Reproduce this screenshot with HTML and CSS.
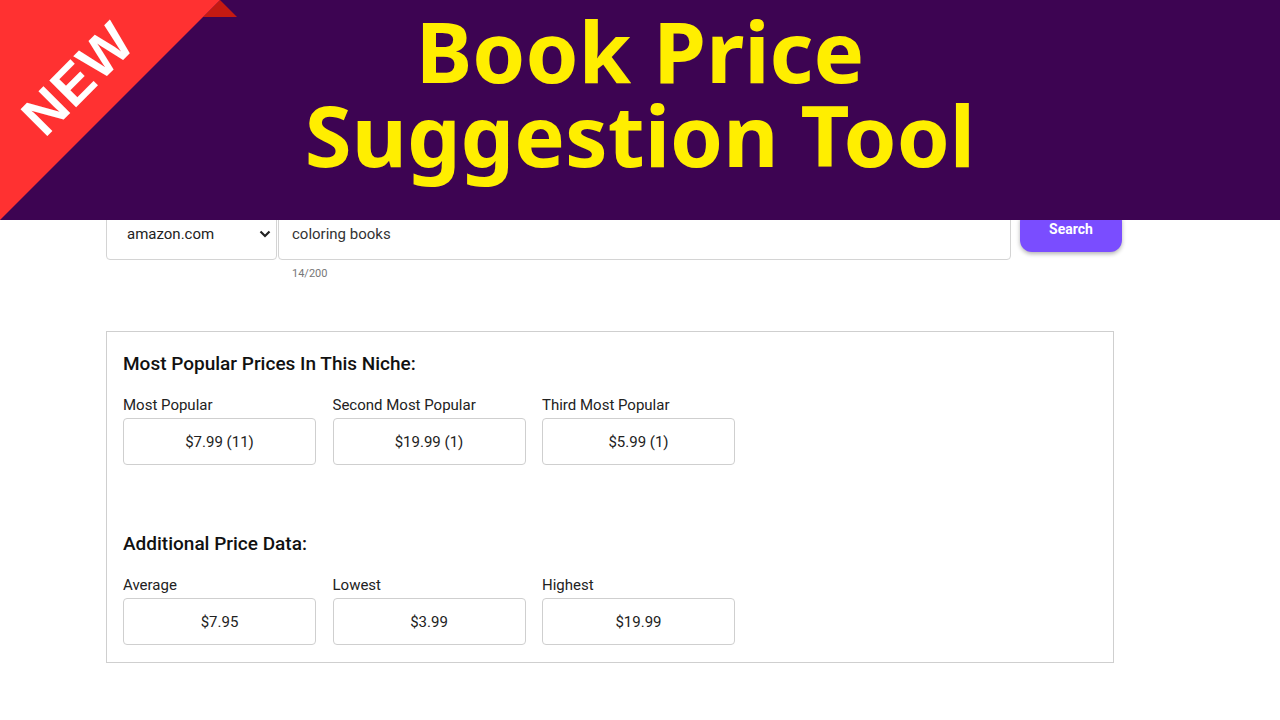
FILE: index.html
```html
<!DOCTYPE html>
<html>
<head>
<meta charset="utf-8">
<link rel="stylesheet" href="styles.css">
</head>
<body>
<header class="banner">
  <svg class="ribbon" width="240" height="220" viewBox="0 0 240 220">
    <polygon points="203,17 220,0 237,17" fill="#c41a12"/>
    <polygon points="0,0 220,0 0,220" fill="#ff3131"/>
  </svg>
  <span class="new-tag">NEW</span>
  <h1 class="title"><span class="line">Book Price</span><span class="line">Suggestion Tool</span></h1>
</header>
<main class="page">
  <div class="search-row">
    <div class="select">
      <span>amazon.com</span>
      <svg class="chev" width="12" height="8" viewBox="0 0 12 8"><path d="M1.5 1.5l4.5 4.5 4.5-4.5" fill="none" stroke="#222" stroke-width="2.2"/></svg>
    </div>
    <div class="query">
      <div class="input">coloring books</div>
      <div class="counter">14/200</div>
    </div>
    <button class="search-btn">Search</button>
  </div>

  <section class="card">
    <h2 class="card-title">Most Popular Prices In This Niche:</h2>
    <div class="stats">
      <div class="stat"><div class="stat-label">Most Popular</div><div class="stat-box">$7.99 (11)</div></div>
      <div class="stat"><div class="stat-label">Second Most Popular</div><div class="stat-box">$19.99 (1)</div></div>
      <div class="stat"><div class="stat-label">Third Most Popular</div><div class="stat-box">$5.99 (1)</div></div>
    </div>
    <h2 class="card-title second">Additional Price Data:</h2>
    <div class="stats">
      <div class="stat"><div class="stat-label">Average</div><div class="stat-box">$7.95</div></div>
      <div class="stat"><div class="stat-label">Lowest</div><div class="stat-box">$3.99</div></div>
      <div class="stat"><div class="stat-label">Highest</div><div class="stat-box">$19.99</div></div>
    </div>
  </section>
</main>
</body>
</html>
```
FILE: styles.css
```css
* { box-sizing: border-box; }
html, body { margin: 0; padding: 0; background: #fff; }
body { font-family: Roboto, "Liberation Sans", sans-serif; color: #202020; width: 1280px; height: 720px; overflow: hidden; position: relative; }

.banner {
  position: absolute; left: 0; top: 0; width: 1280px; height: 220px;
  background: #3d0452; z-index: 5;
}
.ribbon { position: absolute; left: 0; top: 0; }
.new-tag {
  position: absolute; left: 78px; top: 79px;
  transform: translate(-50%, -50%) rotate(-45deg);
  font-family: "Liberation Sans", Arial, sans-serif; font-weight: 700;
  font-size: 55px; line-height: 1; color: #fff; letter-spacing: 1px;
}
.title {
  margin: 0; padding-top: 8px; text-align: center;
  font-family: "Noto Sans", sans-serif; font-weight: 700;
  font-size: 85px; line-height: 84px; color: #ffee00;
}
.title .line { display: block; }

.page { padding: 204px 0 0 106px; }
.search-row { display: flex; align-items: flex-start; }
.select {
  width: 171px; height: 56px; border: 1px solid #d4d4d4; border-radius: 4px;
  display: flex; align-items: center; justify-content: space-between;
  padding: 4px 5px 0 20px; font-size: 15px; color: #222;
}
.query { margin-left: 1px; width: 733px; }
.input {
  height: 56px; border: 1px solid #d4d4d4; border-radius: 4px;
  display: flex; align-items: center; padding: 4px 0 0 13px; font-size: 15px; color: #333;
}
.counter { font-size: 11px; color: #777; padding: 7px 0 0 14px; }
.search-btn {
  margin: 6px 0 0 9px; width: 102px; height: 42px; border: none; border-radius: 12px;
  background: #7a4dff; color: #fff; font-family: Roboto, sans-serif; font-weight: 700;
  font-size: 14px; box-shadow: 0 2px 4px rgba(0,0,0,0.3); padding: 0 0 4px;
}

.card {
  margin-top: 51px; width: 1008px; border: 1px solid #cfcfcf;
  padding: 21px 16px 17px;
}
.card-title { margin: 0; font-size: 19px; font-weight: 500; line-height: 22px; color: #111; }
.card-title.second { margin-top: 68px; }
.stats { display: flex; gap: 16.5px; margin-top: 21px; }
.stat { width: 193px; }
.stat-label { font-size: 15px; line-height: 18px; color: #222; margin-bottom: 4px; }
.stat-box {
  height: 47px; border: 1px solid #cfcfcf; border-radius: 4px;
  display: flex; align-items: center; justify-content: center; font-size: 15px; color: #222;
}
```
